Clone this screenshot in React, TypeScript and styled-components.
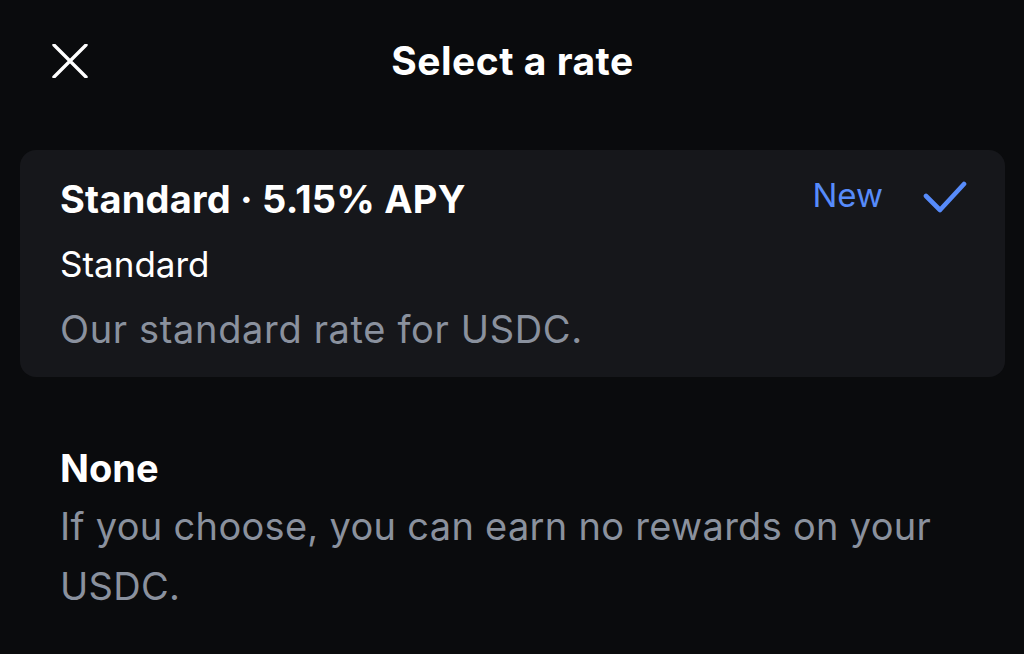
import { createGlobalStyle, styled } from 'styled-components';

const GlobalStyle = createGlobalStyle`
  html, body {
    margin: 0;
    padding: 0;
    background: #0a0b0d;
  }

  body {
    font-family: Inter, 'Noto Sans', sans-serif;
    color: #ffffff;
    -webkit-font-smoothing: antialiased;
  }
`;

const CloseIcon = () => (
  <svg width="36" height="34" viewBox="0 0 36 34" fill="none">
    <path d="M2 1L34 33M34 1L2 33" stroke="#ffffff" strokeWidth="3.4" strokeLinecap="round" />
  </svg>
);

const CheckIcon = () => (
  <CheckMark width="44" height="34" viewBox="0 0 44 34" fill="none">
    <path d="M3 15L17 29L41 3" stroke="#578bfa" strokeWidth="4.6" strokeLinecap="round" strokeLinejoin="round" />
  </CheckMark>
);

const App = () => {
  return (
    <Page>
      <GlobalStyle />
      <Header>
        <CloseButton aria-label="Close">
          <CloseIcon />
        </CloseButton>
        <Title>Select a rate</Title>
      </Header>

      <RateCard>
        <TopRow>
          <RateName>Standard · 5.15% APY</RateName>
          <Badge>
            <NewLabel>New</NewLabel>
            <CheckIcon />
          </Badge>
        </TopRow>
        <RateType>Standard</RateType>
        <Description>Our standard rate for USDC.</Description>
      </RateCard>

      <Option>
        <OptionName>None</OptionName>
        <OptionText>If you choose, you can earn no rewards on your USDC.</OptionText>
      </Option>
    </Page>
  );
};

export default App;

const Page = styled.div`
  width: 1024px;
  height: 654px;
  box-sizing: border-box;
  padding: 0 19px 0 20px;
  overflow: hidden;
`;

const Header = styled.div`
  position: relative;
  height: 122px;
  display: flex;
  align-items: center;
  justify-content: center;
`;

const CloseButton = styled.button`
  position: absolute;
  left: 32px;
  top: 44px;
  padding: 0;
  border: 0;
  background: none;
  display: flex;
`;

const Title = styled.h1`
  margin: 0;
  font-size: 39px;
  font-weight: 700;
  letter-spacing: 0.5px;
  line-height: 48px;
`;

const RateCard = styled.div`
  margin-top: 28px;
  height: 227px;
  box-sizing: border-box;
  padding: 24px 40px 22px;
  border-radius: 16px;
  background: #16171b;
  display: flex;
  flex-direction: column;
  gap: 15px;
`;

const TopRow = styled.div`
  display: flex;
  align-items: flex-start;
  justify-content: space-between;
`;

const RateName = styled.div`
  font-size: 38px;
  font-weight: 700;
  line-height: 50px;
  letter-spacing: 0.2px;
`;

const Badge = styled.div`
  display: flex;
  align-items: flex-start;
  gap: 40px;
  margin-top: 1px;
  margin-right: -2px;
`;

const NewLabel = styled.span`
  font-size: 33px;
  color: #578bfa;
  line-height: 40px;
`;

const CheckMark = styled.svg`
  margin-top: 6px;
`;

const RateType = styled.div`
  font-size: 35px;
  line-height: 50px;
`;

const Description = styled.div`
  font-size: 38px;
  line-height: 50px;
  color: #8a919e;
  letter-spacing: 0.65px;
`;

const Option = styled.div`
  margin-top: 66px;
  padding: 0 56px 0 40px;
  display: flex;
  flex-direction: column;
  gap: 3px;
`;

const OptionName = styled.div`
  font-size: 38px;
  font-weight: 700;
  line-height: 50px;
`;

const OptionText = styled.div`
  font-size: 38px;
  line-height: 60px;
  color: #8a919e;
  letter-spacing: 0.3px;
`;
